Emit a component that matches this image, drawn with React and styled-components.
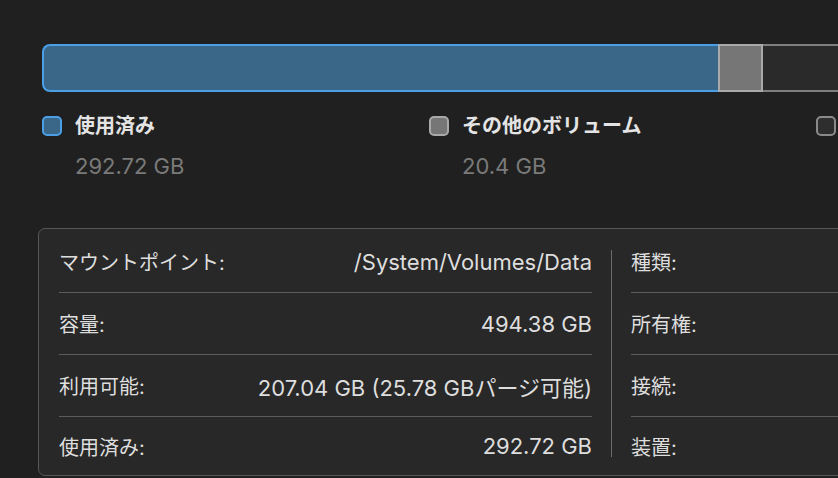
import styled, {createGlobalStyle} from 'styled-components'

const GlobalStyle = createGlobalStyle`
  html, body {
    margin: 0;
    background: #202020;
    overflow: hidden;
  }
  body {
    font-family: "Inter", "Noto Sans CJK JP", sans-serif;
    color: #dedede;
  }
`

const segments = [
  {id: 'used', width: 676, fill: '#3a6688', border: '#4a9fe6', first: true},
  {id: 'other', width: 45, fill: '#767676', border: '#a9a9a9'},
  {id: 'free', fill: '#2a2a2a', border: '#7f7f7f', last: true},
]

// the third entry sits at the right edge, only its swatch is in view
const legend = [
  {id: 'used', label: '使用済み', value: '292.72 GB', fill: '#3a6688', border: '#4a9fe6'},
  {id: 'other', label: 'その他のボリューム', value: '20.4 GB', fill: '#767676', border: '#a9a9a9'},
  {id: 'free', fill: '#2e2e2e', border: '#8a8a8a'},
]

const leftRows = [
  {label: 'マウントポイント:', value: '/System/Volumes/Data'},
  {label: '容量:', value: '494.38 GB'},
  {label: '利用可能:', value: '207.04 GB (25.78 GBパージ可能)'},
  {label: '使用済み:', value: '292.72 GB'},
]

const rightRows = ['種類:', '所有権:', '接続:', '装置:']

const App = () => (
  <>
    <GlobalStyle />
    <Page>
      <UsageBar>
        {segments.map(s => (
          <Segment
            key={s.id}
            $fill={s.fill}
            $border={s.border}
            $first={s.first}
            $last={s.last}
            style={s.width ? {width: s.width} : undefined}
          />
        ))}
      </UsageBar>

      <Legend>
        {legend.map(item => (
          <LegendItem key={item.id}>
            <Swatch $fill={item.fill} $border={item.border} />
            {item.label && <LegendLabel>{item.label}</LegendLabel>}
            {item.value && <LegendValue>{item.value}</LegendValue>}
          </LegendItem>
        ))}
      </Legend>

      <InfoPanel>
        <InfoColumn>
          {leftRows.map(row => (
            <InfoRow key={row.label}>
              <InfoLabel>{row.label}</InfoLabel>
              <InfoValue>{row.value}</InfoValue>
            </InfoRow>
          ))}
        </InfoColumn>
        <Divider />
        <InfoColumn>
          {rightRows.map(label => (
            <InfoRow key={label}>
              <InfoLabel>{label}</InfoLabel>
            </InfoRow>
          ))}
        </InfoColumn>
      </InfoPanel>
    </Page>
  </>
)

export default App

const Page = styled.div`
  width: 1200px;
  padding: 44px 0 0 42px;
`

const UsageBar = styled.div`
  display: flex;
  width: 1150px;
  height: 48px;
`

const Segment = styled.div`
  box-sizing: border-box;
  height: 100%;
  flex: ${p => (p.$last ? '1' : 'none')};
  background: ${p => p.$fill};
  border: 2px solid ${p => p.$border};
  border-left-width: ${p => (p.$last ? '0' : '2px')};
  border-right-width: ${p => (p.$first ? '0' : '2px')};
  border-radius: ${p => (p.$first ? '8px 0 0 8px' : p.$last ? '0 8px 8px 0' : '0')};
`

const Legend = styled.div`
  display: grid;
  grid-template-columns: repeat(3, 387px);
  margin-top: 22px;
`

const LegendItem = styled.div`
  display: grid;
  grid-template-columns: 20px auto;
  grid-auto-rows: 24px;
  column-gap: 13px;
  row-gap: 16px;
  align-items: center;
`

const Swatch = styled.div`
  box-sizing: border-box;
  width: 20px;
  height: 20px;
  border-radius: 5px;
  background: ${p => p.$fill};
  border: 2px solid ${p => p.$border};
`

const LegendLabel = styled.div`
  font-size: 20px;
  line-height: 24px;
  font-weight: 700;
  color: #e4e4e4;
`

const LegendValue = styled.div`
  grid-column: 2;
  font-size: 22px;
  line-height: 24px;
  color: #7a7a7a;
`

const InfoPanel = styled.div`
  box-sizing: border-box;
  display: grid;
  grid-template-columns: 533px 1px 1fr;
  column-gap: 19px;
  width: 1100px;
  height: 248px;
  margin: 50px 0 0 -4px;
  padding: 2px 0 0 20px;
  background: #282828;
  border: 1px solid #575757;
  border-radius: 7px;
  overflow: hidden;
`

const InfoColumn = styled.div`
  display: flex;
  flex-direction: column;
`

const InfoRow = styled.div`
  display: flex;
  align-items: center;
  justify-content: space-between;
  flex: none;
  height: 61px;
  border-bottom: 1px solid #5c5c5c;

  &:last-child {
    border-bottom: none;
    height: 58px;
  }
`

const InfoLabel = styled.div`
  font-size: 20px;
  color: #dedede;
`

const InfoValue = styled.div`
  font-size: 22px;
  color: #dedede;
`

const Divider = styled.div`
  background: #6a6a6a;
  margin: 19px 0 18px;
`
